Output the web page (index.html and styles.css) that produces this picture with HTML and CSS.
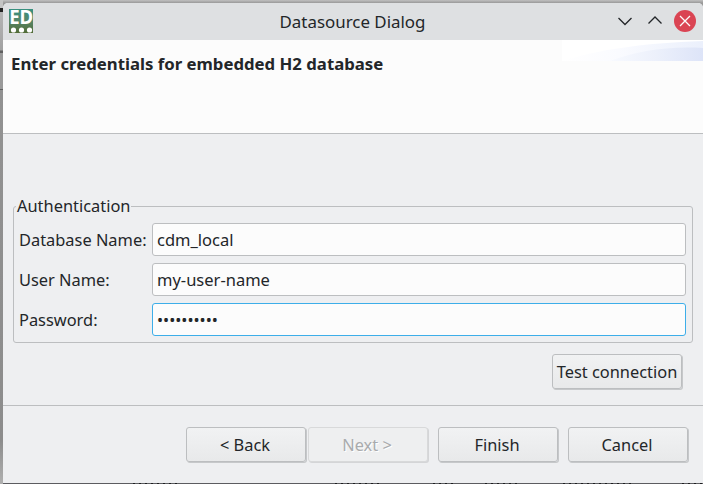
FILE: index.html
```html
<!DOCTYPE html>
<html lang="en">
<head>
<meta charset="utf-8">
<title>Datasource Dialog</title>
<link rel="stylesheet" href="styles.css">
</head>
<body>
<main class="dialog">
  <header class="titlebar">
    <svg class="app-icon" width="24" height="24" viewBox="0 0 24 24">
      <defs><linearGradient id="app" x1="0" y1="0" x2="0" y2="1"><stop offset="0" stop-color="#369080"/><stop offset=".5" stop-color="#568669"/><stop offset="1" stop-color="#526c36"/></linearGradient></defs>
      <rect width="24" height="24" fill="url(#app)"/>
      <text class="app-letters" x=".2" y="15.3" textLength="24" lengthAdjust="spacingAndGlyphs">ED</text>
      <circle cx="4.5" cy="21" r="2.6" fill="#fff"/><circle cx="12.5" cy="21" r="2.6" fill="#fff"/><circle cx="20.5" cy="21" r="2.6" fill="#fff"/>
    </svg>
    <h1 class="title">Datasource Dialog</h1>
    <div class="controls">
      <svg width="14" height="22" viewBox="0 0 14 22"><path class="chevron" d="M.5 8 7 14.5 13.5 8"/></svg>
      <svg width="14" height="22" viewBox="0 0 14 22"><path class="chevron" d="M.5 13.5 7 7 13.5 13.5"/></svg>
      <svg width="22" height="22" viewBox="0 0 22 22"><circle cx="11" cy="11" r="11" fill="#da4453"/><path class="cross" d="M6 6 16 16M16 6 6 16"/></svg>
    </div>
  </header>
  <section class="banner">
    <h2 class="heading">Enter credentials for embedded H2 database</h2>
    <svg class="swoosh" width="141" height="21" viewBox="0 0 141 21">
      <defs>
        <linearGradient id="wave" x1="0" x2="1"><stop offset="0" stop-color="#fff"/><stop offset=".4" stop-color="#fafbff"/><stop offset="1" stop-color="#ebf0fc"/></linearGradient>
        <linearGradient id="deep" x1="0" x2="1"><stop offset="0" stop-color="#f8faff"/><stop offset=".5" stop-color="#ecf0fb"/><stop offset="1" stop-color="#dde4f8"/></linearGradient>
      </defs>
      <rect width="141" height="21" fill="#fff"/>
      <path d="M0 21C35 10 80 3 141 1V21Z" fill="url(#wave)"/>
      <path d="M48 21C75 11 105 6 141 8V21Z" fill="url(#deep)"/>
    </svg>
  </section>
  <section class="content">
    <fieldset class="group">
      <legend>Authentication</legend>
      <label for="db">Database Name:</label><input id="db" type="text" value="cdm_local">
      <label for="user">User Name:</label><input id="user" type="text" value="my-user-name">
      <label for="pw">Password:</label><input id="pw" class="active" type="text" value="••••••••••">
    </fieldset>
    <button class="test">Test connection</button>
  </section>
  <footer class="actions">
    <button>&lt; Back</button>
    <button class="next" disabled>Next &gt;</button>
    <button>Finish</button>
    <button>Cancel</button>
  </footer>
</main>
</body>
</html>
```
FILE: styles.css
```css
* { box-sizing: border-box; }
body {
  margin: 0;
  width: 703px;
  height: 484px;
  padding: 3px 0 1px 3px;
  overflow: hidden;
  background:
    repeating-linear-gradient(90deg, #1d1e20 0 2px, #5b5c60 2px 6px) 133px 483px / 46px 1px no-repeat,
    repeating-linear-gradient(90deg, #1d1e20 0 2px, #5b5c60 2px 6px) 335px 483px / 44px 1px no-repeat,
    repeating-linear-gradient(90deg, #1d1e20 0 2px, #5b5c60 2px 6px) 433px 483px / 21px 1px no-repeat,
    repeating-linear-gradient(90deg, #1d1e20 0 2px, #5b5c60 2px 6px) 485px 483px / 35px 1px no-repeat,
    repeating-linear-gradient(90deg, #1d1e20 0 2px, #5b5c60 2px 6px) 563px 483px / 72px 1px no-repeat,
    repeating-linear-gradient(90deg, #1d1e20 0 2px, #5b5c60 2px 6px) 682px 483px / 21px 1px no-repeat,
    linear-gradient(#c4c4c4 0 8px, #222 8px 12px, #b4b4b4 12px, #a2a2a2 50px, #606060 51px 53px, #9a9a9a 53px 89px, #606060 89px 90px, #929292 90px, #8c8c8c 440px, #b0b0b0 484px) 0 0 / 3px 484px no-repeat,
    linear-gradient(#c0c0c0 0, #999 3px, #999 12px, #5b5c60 13px);
  font: 16.4px/22px "Noto Sans", sans-serif;
  color: #232629;
}
.dialog {
  display: flex;
  flex-direction: column;
  height: 480px;
  background: #eeeff1;
  border-radius: 5px 5px 0 0;
  overflow: hidden;
}
.titlebar {
  display: grid;
  grid-template-columns: 100px 1fr 100px;
  align-items: center;
  height: 37px;
  padding: 0 7px 0 6px;
  background: #dee0e2;
}
.app-icon { position: relative; top: -1px; overflow: visible; }
.app-letters { font: bold 20px "Noto Sans", sans-serif; fill: #fff; }
.title { margin: 0; font-size: 16.9px; font-weight: 400; text-align: center; }
.controls { display: flex; justify-content: flex-end; align-items: center; gap: 16px; margin-top: -2px; }
.controls svg:last-child { margin-left: -4px; }
.chevron { fill: none; stroke: #232629; stroke-width: 1.3; }
.cross { stroke: #fcfcfc; stroke-width: 1.3; }
.banner {
  display: flex;
  justify-content: space-between;
  height: 94px;
  background: #fcfcfc;
  border-bottom: 1px solid #bcbec0;
}
.heading { margin: 13px 0 0 8px; font-size: 16.76px; line-height: 22px; font-weight: 700; white-space: nowrap; }
.content {
  display: flex;
  flex-direction: column;
  height: 272px;
  padding: 61px 10px 0;
  border-bottom: 1px solid #bcbec0;
}
.group {
  display: grid;
  grid-template-columns: 128px 534px;
  column-gap: 5px;
  row-gap: 7px;
  align-items: center;
  margin: 0;
  height: 148px;
  padding: 6px 6px 6px 5px;
  border: 1px solid #bcbec0;
  border-radius: 3px;
}
legend { margin-left: -3px; padding: 0 1px; height: 22px; }
label { white-space: nowrap; }
input {
  width: 534px;
  height: 33px;
  padding: 0 4px;
  border: 1px solid #bcbec0;
  border-radius: 3px;
  outline: 0;
  background: #fcfcfc;
  color: #232629;
  font: inherit;
  font-size: 16.5px;
}
input.active { border-color: #3daee9; font-size: 16.2px; }
button {
  width: 120px;
  height: 35px;
  margin-right: 1px;
  padding: 0;
  border: 1px solid #bcbec0;
  border-radius: 3px;
  box-shadow: 1px 1px 0 #c6c8ca;
  background: linear-gradient(#f1f2f3, #e8e9ea);
  color: #232629;
  font: inherit;
  white-space: nowrap;
}
.test { align-self: flex-end; width: 130px; margin: 11px 11px 0 0; }
.actions { display: flex; justify-content: flex-end; padding: 21px 14px 0 0; gap: 9px; }
.actions button { padding-right: 2px; }
.next { margin-left: -8px; border-color: #d8d9da; box-shadow: 1px 1px 0 #d4d5d7; background: #eeeff0; color: #a9abad; text-shadow: 1px 1px #fff; }
```
